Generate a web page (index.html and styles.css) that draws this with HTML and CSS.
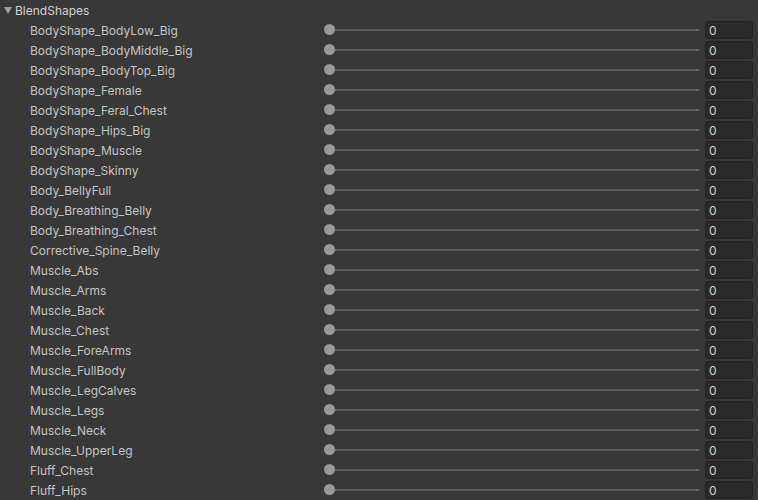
FILE: index.html
```html
<!DOCTYPE html>
<html>
<head>
<meta charset="utf-8">
<link rel="stylesheet" href="styles.css">
</head>
<body>
<div class="panel">
  <div class="header">
    <svg class="fold" width="8" height="7" viewBox="0 0 8 7"><polygon points="0,0 8,0 4,7" fill="#a0a0a0"/></svg>
    <span class="title">BlendShapes</span>
  </div>
  <div class="rows" id="rows"></div>
</div>
<script>
var names = ["BodyShape_BodyLow_Big","BodyShape_BodyMiddle_Big","BodyShape_BodyTop_Big","BodyShape_Female","BodyShape_Feral_Chest","BodyShape_Hips_Big","BodyShape_Muscle","BodyShape_Skinny","Body_BellyFull","Body_Breathing_Belly","Body_Breathing_Chest","Corrective_Spine_Belly","Muscle_Abs","Muscle_Arms","Muscle_Back","Muscle_Chest","Muscle_ForeArms","Muscle_FullBody","Muscle_LegCalves","Muscle_Legs","Muscle_Neck","Muscle_UpperLeg","Fluff_Chest","Fluff_Hips"];
var c = document.getElementById('rows');
names.forEach(function(n){
  var r = document.createElement('div');
  r.className = 'row';
  r.innerHTML = '<span class="label">'+n+'</span><div class="slider"><div class="track"></div><div class="thumb"></div></div><div class="field">0</div>';
  c.appendChild(r);
});
</script>
</body>
</html>
```
FILE: styles.css
```css
html, body {
  margin: 0;
  padding: 0;
  background: #383838;
  width: 758px;
  height: 500px;
  overflow: hidden;
}
.panel {
  font-family: Inter, "Liberation Sans", sans-serif;
  font-size: 12px;
  color: #c4c4c4;
}
.header {
  height: 20px;
  display: flex;
  align-items: center;
  padding-left: 4px;
  gap: 3px;
}
.fold {
  display: block;
  margin-top: 1px;
}
.title {
  color: #d2d2d2;
  line-height: 20px;
  padding-top: 1px;
}
.row {
  height: 20px;
  display: grid;
  grid-template-columns: 288px 375px 48px;
  column-gap: 6px;
  padding-left: 30px;
  padding-right: 5px;
  align-items: center;
}
.label {
  line-height: 20px;
  padding-top: 1px;
  white-space: nowrap;
  overflow: hidden;
}
.slider {
  position: relative;
  height: 20px;
}
.track {
  position: absolute;
  left: 4px;
  right: 0;
  top: 9px;
  height: 2px;
  background: #5e5e5e;
}
.thumb {
  position: absolute;
  left: 0;
  top: 4px;
  width: 11px;
  height: 11px;
  border-radius: 50%;
  background: #999999;
}
.field {
  height: 16px;
  box-sizing: content-box;
  border: 1px solid #212121;
  border-radius: 3px;
  background: #2a2a2a;
  color: #d2d2d2;
  padding-left: 3px;
  line-height: 17px;
  font-size: 12px;
}
```
